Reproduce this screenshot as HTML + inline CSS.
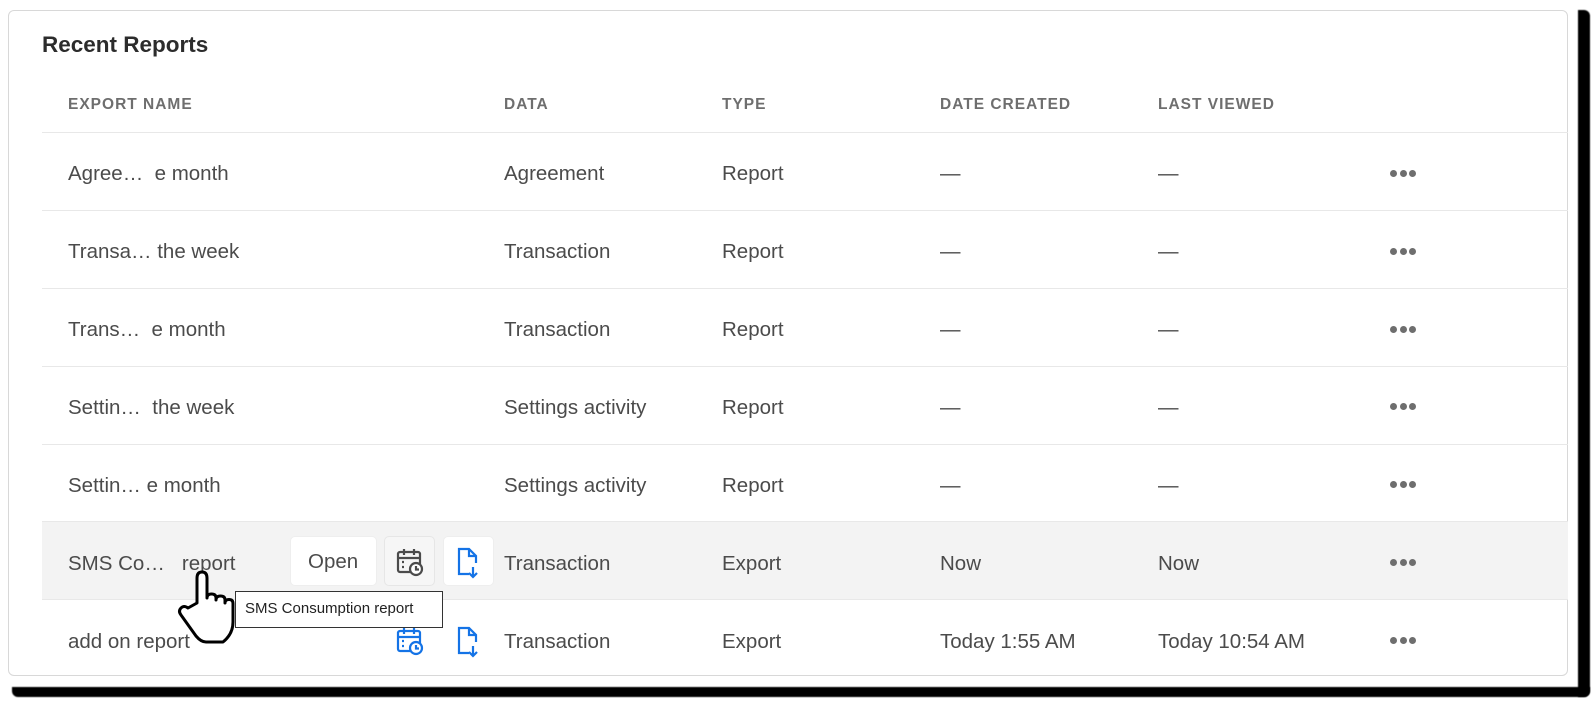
<!DOCTYPE html>
<html><head><meta charset="utf-8"><style>
*{margin:0;padding:0;box-sizing:border-box}
body{width:1593px;height:701px;background:#fff;position:relative;overflow:hidden;font-family:"Liberation Sans",sans-serif;color:#4b4b4b}
.sh1{position:absolute;left:1578px;top:10px;width:12px;height:687px;background:#000;border-radius:0 6px 6px 0;filter:blur(0.6px)}
.sh2{position:absolute;left:12px;top:687px;width:1578px;height:10px;background:#000;border-radius:0 0 6px 6px;filter:blur(0.6px)}
.card{position:absolute;left:8px;top:10px;width:1560px;height:666px;border:1px solid #d8d8d8;border-radius:6px;background:#fff}
h1{position:absolute;left:42px;top:32px;font-size:22.5px;font-weight:bold;color:#2c2c2c}
.hd{position:absolute;top:96px;font-size:15.5px;font-weight:bold;letter-spacing:1px;color:#6e6e6e}
.line{position:absolute;left:42px;width:1526px;height:1px;background:#e8e8e8}
.cell{position:absolute;font-size:20.5px;color:#4b4b4b;white-space:nowrap}
.dots{position:absolute;left:1390px;width:26px;height:7px}
.dots i{position:absolute;top:0;width:7px;height:7px;border-radius:50%;background:#6e6e6e}
.btn{position:absolute;top:536px;height:50px;background:#fff;border-radius:5px;border:1px solid #eee}
</style></head><body>
<div class="sh1"></div><div class="sh2"></div>
<div class="card"></div>
<h1>Recent Reports</h1>
<div class="hd" style="left:68px">EXPORT NAME</div>
<div class="hd" style="left:504px">DATA</div>
<div class="hd" style="left:722px">TYPE</div>
<div class="hd" style="left:940px">DATE CREATED</div>
<div class="hd" style="left:1158px">LAST VIEWED</div>
<div style="position:absolute;left:42px;top:521px;width:1526px;height:78px;background:#f3f3f3"></div>
<div class="line" style="top:132px"></div>
<div class="line" style="top:210px"></div>
<div class="line" style="top:288px"></div>
<div class="line" style="top:366px"></div>
<div class="line" style="top:444px"></div>
<div class="line" style="top:521px"></div>
<div class="line" style="top:599px"></div>

<div class="cell" style="left:68px;top:162px">Agree…&nbsp; e month</div>
<div class="cell" style="left:504px;top:162px">Agreement</div>
<div class="cell" style="left:722px;top:162px">Report</div>
<div class="cell" style="left:940px;top:162px">—</div>
<div class="cell" style="left:1158px;top:162px">—</div>
<div class="dots" style="top:170px"><i style="left:0"></i><i style="left:9.5px"></i><i style="left:19px"></i></div>

<div class="cell" style="left:68px;top:240px">Transa… the week</div>
<div class="cell" style="left:504px;top:240px">Transaction</div>
<div class="cell" style="left:722px;top:240px">Report</div>
<div class="cell" style="left:940px;top:240px">—</div>
<div class="cell" style="left:1158px;top:240px">—</div>
<div class="dots" style="top:248px"><i style="left:0"></i><i style="left:9.5px"></i><i style="left:19px"></i></div>

<div class="cell" style="left:68px;top:318px">Trans…&nbsp; e month</div>
<div class="cell" style="left:504px;top:318px">Transaction</div>
<div class="cell" style="left:722px;top:318px">Report</div>
<div class="cell" style="left:940px;top:318px">—</div>
<div class="cell" style="left:1158px;top:318px">—</div>
<div class="dots" style="top:326px"><i style="left:0"></i><i style="left:9.5px"></i><i style="left:19px"></i></div>

<div class="cell" style="left:68px;top:396px">Settin…&nbsp; the week</div>
<div class="cell" style="left:504px;top:396px">Settings activity</div>
<div class="cell" style="left:722px;top:396px">Report</div>
<div class="cell" style="left:940px;top:396px">—</div>
<div class="cell" style="left:1158px;top:396px">—</div>
<div class="dots" style="top:403px"><i style="left:0"></i><i style="left:9.5px"></i><i style="left:19px"></i></div>

<div class="cell" style="left:68px;top:474px">Settin… e month</div>
<div class="cell" style="left:504px;top:474px">Settings activity</div>
<div class="cell" style="left:722px;top:474px">Report</div>
<div class="cell" style="left:940px;top:474px">—</div>
<div class="cell" style="left:1158px;top:474px">—</div>
<div class="dots" style="top:481px"><i style="left:0"></i><i style="left:9.5px"></i><i style="left:19px"></i></div>

<div class="cell" style="left:68px;top:552px">SMS Co…&nbsp;&nbsp; report</div>
<div class="btn" style="left:290px;width:87px"><div class="cell" style="left:17px;top:13px">Open</div></div>
<div class="btn" style="left:384px;width:51px;background:#f6f6f6;border-color:#e6e6e6"></div>
<div class="btn" style="left:443px;width:51px"></div>
<div class="cell" style="left:504px;top:552px">Transaction</div>
<div class="cell" style="left:722px;top:552px">Export</div>
<div class="cell" style="left:940px;top:552px">Now</div>
<div class="cell" style="left:1158px;top:552px">Now</div>
<div class="dots" style="top:559px"><i style="left:0"></i><i style="left:9.5px"></i><i style="left:19px"></i></div>

<div class="cell" style="left:68px;top:630px">add on report</div>
<div class="cell" style="left:504px;top:630px">Transaction</div>
<div class="cell" style="left:722px;top:630px">Export</div>
<div class="cell" style="left:940px;top:630px">Today 1:55 AM</div>
<div class="cell" style="left:1158px;top:630px">Today 10:54 AM</div>
<div class="dots" style="top:637px"><i style="left:0"></i><i style="left:9.5px"></i><i style="left:19px"></i></div>

<svg width="1593" height="701" style="position:absolute;left:0;top:0">
<defs>
<g id="cal" fill="none" stroke-width="2.2">
<rect x="-12" y="-10" width="22" height="20" rx="2"/>
<line x1="-12" y1="-4" x2="10" y2="-4"/>
<line x1="-6" y1="-13" x2="-6" y2="-7"/><line x1="4" y1="-13" x2="4" y2="-7"/>
<circle cx="6" cy="7" r="6" fill="#fff"/>
<path d="M6 4v3.5h3"/>
<path d="M-8 0h2M-8 5h2" />
</g>
<g id="doc" fill="none" stroke-width="2.2">
<path d="M2 12H-8V-13H2l7 7V1"/>
<path d="M2 -13v7h7"/>
<path d="M6 5v10M2 11l4 4 4-4"/>
</g>
</defs>
<use href="#cal" x="410" y="562" stroke="#4b4b4b"/>
<use href="#doc" x="467" y="562" stroke="#1473e6"/>
<use href="#cal" x="410" y="641" stroke="#1473e6"/>
<use href="#doc" x="467" y="641" stroke="#1473e6"/>
<path d="M197 603 V578 q0-6 5-6 q5 0 5 6 V598 q0-4 4.5-4 q4.5 0 4.5 4 v2 q0-4 4.5-4 q4.5 0 4.5 4 v3 q0-3.5 4-3.5 q4 0 4 4 V622 q0 12-10 20 H206 q-5 0-10-6 L181 615 q-3-4 0-7 q3-3 7 0 Z" fill="#fff" stroke="#000" stroke-width="3" stroke-linejoin="round"/>
</svg>
<div style="position:absolute;left:235px;top:591px;width:208px;height:37px;background:#fff;border:1.5px solid #333;font-size:15px;color:#222;padding:8px 0 0 9px;white-space:nowrap">SMS Consumption report</div>
</body></html>
